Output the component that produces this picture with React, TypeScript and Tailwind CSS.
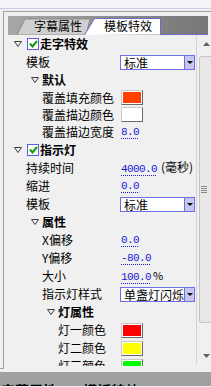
import React from "react";

const Caret = () => (
  <svg width="8" height="6" viewBox="0 0 8 6" className="shrink-0">
    <path d="M0.5 0.5H7.5L4 5.5Z" fill="#f4f4f4" stroke="#3c3c3c" strokeWidth="1" />
  </svg>
);

const Check = () => (
  <span className="flex h-[12px] w-[12px] shrink-0 items-center justify-center border border-[#5c5ce6] bg-white">
    <svg width="9" height="8" viewBox="0 0 9 8">
      <path d="M1 3.5L3.5 6.5L8 1" fill="none" stroke="#0a9a0a" strokeWidth="2" />
    </svg>
  </span>
);

const Select = ({ value, clip = "" }: { value: string; clip?: string }) => (
  <div className="-ml-px flex h-[15px] w-[75px] items-center border border-[#6e6ee6] bg-white">
    <span className={`min-w-0 flex-1 whitespace-nowrap pl-[3px] text-[12px] leading-[13px] text-black ${clip}`}>
      {value}
    </span>
    <span className="flex h-full w-[10px] shrink-0 items-center justify-center border-l border-[#6e6ee6] bg-[#c6c6ee]">
      <svg width="6" height="3" viewBox="0 0 6 3">
        <path d="M0 0H6L3 3Z" fill="#000" />
      </svg>
    </span>
  </div>
);

const Swatch = ({ fill }: { fill: string }) => (
  <span className="block h-[15px] w-[22px] border border-b-[#6a6a6a] border-l-[#c8c8c8] border-r-[#6a6a6a] border-t-[#c8c8c8] bg-white p-px">
    <span className={`block h-full w-full ${fill}`} />
  </span>
);

const Num = ({ v }: { v: string }) => (
  <span className="font-['Liberation_Mono',monospace] text-[11px] tracking-[-0.6px] text-[#1a1ad6] underline decoration-[#1a1ad6] decoration-dotted underline-offset-[3px]">
    {v}
  </span>
);

const Row = ({
  pad,
  h = "h-[18px]",
  children,
  right,
}: {
  pad: string;
  h?: string;
  children: React.ReactNode;
  right?: React.ReactNode;
}) => (
  <div className={`flex shrink-0 items-center ${h}`}>
    <div className={`flex w-[117px] shrink-0 items-center ${pad}`}>{children}</div>
    {right}
  </div>
);

const App = () => {
  return (
    <div className="relative h-[387px] w-[211px] overflow-hidden bg-[#f0f0f0] font-['Noto_Sans_CJK_SC',sans-serif] text-[12px] leading-[18px] text-black">
      {/* top strip */}
      <div className="h-[9px] border-b border-[#c9cde0] bg-[#f3f4f8]" />
      <div className="h-[2px]" />

      {/* panel */}
      <div className="flex h-[358px]">
        <div className="w-[3px] shrink-0 border-b border-[#a0a0a0]" />
        <div className="flex flex-1 flex-col border-l border-t border-[#a0a0a0]">
          {/* tabs */}
          <div className="pl-[4px] pr-[3px] pt-[4px]">
            <div className="relative h-[19px] bg-linear-to-r from-[#a8a8a8] to-[#767676]">
              <svg className="absolute inset-0" width="200" height="19" viewBox="0 0 200 19">
                <path d="M9 19L17 3H82L78 19Z" fill="#cfcfcf" stroke="#8c8c8c" strokeWidth="1" />
                <path d="M76.5 19L86.5 2.5H152.5V18.5" fill="#ffffff" stroke="#6a6ac8" strokeWidth="1" />
                <path d="M152 18.5H200" stroke="#6a6ac8" strokeWidth="1" />
              </svg>
              <div className="relative flex h-full items-center pl-[26px] pt-[1px]">
                <span className="w-[70px] leading-[16px]">字幕属性</span>
                <span className="leading-[16px]">模板特效</span>
              </div>
            </div>
          </div>

          {/* list + scrollbar */}
          <div className="flex h-[331px]">
            <div className="flex flex-1 flex-col overflow-hidden">
              <Row pad="pl-[10px] gap-[5px]">
                <Caret />
                <Check />
                <span className="-ml-[4px] font-bold">走字特效</span>
              </Row>
              <Row pad="pl-[22px]" right={<Select value="标准" />}>
                模板
              </Row>
              <Row pad="pl-[27px] gap-[3px]">
                <Caret />
                <span className="font-bold">默认</span>
              </Row>
              <Row pad="pl-[38px]" h="h-[17px]" right={<Swatch fill="bg-[#ff4000]" />}>
                覆盖填充颜色
              </Row>
              <Row pad="pl-[38px]" h="h-[17px]" right={<Swatch fill="bg-white" />}>
                覆盖描边颜色
              </Row>
              <Row pad="pl-[38px]" right={<Num v="8.0" />}>
                覆盖描边宽度
              </Row>
              <Row pad="pl-[10px] gap-[5px]">
                <Caret />
                <Check />
                <span className="-ml-[4px] font-bold">指示灯</span>
              </Row>
              <Row
                pad="pl-[22px]"
                right={
                  <span className="whitespace-nowrap">
                    <Num v="4000.0" />
                    <span className="pl-[4px]">(毫秒)</span>
                  </span>
                }
              >
                持续时间
              </Row>
              <Row pad="pl-[22px]" right={<Num v="0.0" />}>
                缩进
              </Row>
              <Row pad="pl-[22px]" right={<Select value="标准" />}>
                模板
              </Row>
              <Row pad="pl-[27px] gap-[3px]">
                <Caret />
                <span className="font-bold">属性</span>
              </Row>
              <Row pad="pl-[38px]" right={<Num v="0.0" />}>
                X偏移
              </Row>
              <Row pad="pl-[38px]" right={<Num v="-80.0" />}>
                Y偏移
              </Row>
              <Row
                pad="pl-[38px]"
                right={
                  <span className="whitespace-nowrap">
                    <Num v="100.0" />
                    <span className="pl-[2px] text-[11px]">%</span>
                  </span>
                }
              >
                大小
              </Row>
              <Row pad="pl-[38px]" right={<Select value="单盏灯闪烁" clip="overflow-x-clip" />}>
                指示灯样式
              </Row>
              <Row pad="pl-[43px] gap-[3px]">
                <Caret />
                <span className="font-bold">灯属性</span>
              </Row>
              <Row pad="pl-[54px]" right={<Swatch fill="bg-[#ff0000]" />}>
                灯一颜色
              </Row>
              <Row pad="pl-[54px]" right={<Swatch fill="bg-[#ffff00]" />}>
                灯二颜色
              </Row>
              <Row pad="pl-[54px]" right={<Swatch fill="bg-[#00ff00]" />}>
                灯三颜色
              </Row>
            </div>

            {/* scrollbar */}
            <div className="flex h-[329px] w-[15px] shrink-0 flex-col border-l border-[#d4d4d4] bg-[#f0f0f0]">
              <div className="flex h-[17px] shrink-0 items-center justify-end pr-[1px]">
                <svg width="7" height="4" viewBox="0 0 7 4">
                  <path d="M0 4H7L3.5 0Z" fill="#606060" />
                </svg>
              </div>
              <div className="ml-[2px] mt-[4px] flex h-[267px] shrink-0 items-center rounded-bl-[3px] rounded-tl-[3px] border border-r-0 border-[#c4c4c4] bg-[#e8e8e8] pl-[1px]">
                <div className="flex flex-col gap-[1px]">
                  <span className="block h-px w-[6px] bg-[#8a8a8a]" />
                  <span className="block h-px w-[6px] bg-[#8a8a8a]" />
                  <span className="block h-px w-[6px] bg-[#8a8a8a]" />
                  <span className="block h-px w-[6px] bg-[#8a8a8a]" />
                </div>
              </div>
              <div className="flex-1" />
              <div className="flex h-[17px] shrink-0 items-center justify-end pr-[1px]">
                <svg width="7" height="4" viewBox="0 0 7 4">
                  <path d="M0 0H7L3.5 4Z" fill="#606060" />
                </svg>
              </div>
            </div>
          </div>
        </div>
      </div>

      {/* bottom band */}
      <div className="mt-[3px] h-[14px] overflow-hidden bg-[#a0a0a0] pl-[1px]">
        <div className="flex gap-[26px] pt-[10px] text-[14px] font-bold leading-[16px]">
          <span>字幕属性</span>
          <span>模板特效</span>
        </div>
      </div>
    </div>
  );
};

export default App;
